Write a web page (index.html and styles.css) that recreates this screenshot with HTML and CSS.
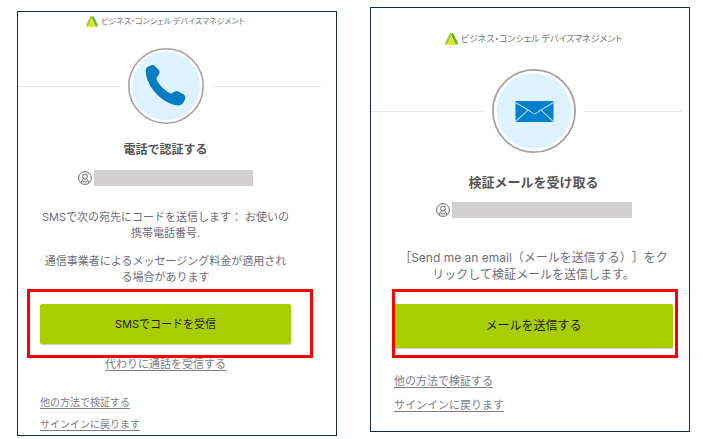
FILE: index.html
```html
<!DOCTYPE html>
<html lang="ja">
<head>
    <meta charset="UTF-8" />
    <meta name="viewport" content="width=device-width, initial-scale=1" />
    <title>ビジネス・コンシェル デバイスマネジメント</title>
    <link rel="stylesheet" href="styles.css">
</head>
<body>
    <main class="screens">
        <section class="card card-sms">
            <div class="brand">
                <svg class="brand-icon" viewBox="0 0 13 12">
                    <path d="M4.4 1.2Q5 0 6.5 0T8.6 1.2L6.3 3 3 11.8H1.6Q-.4 11.6.4 9.4Z" fill="#a5ce1e" />
                    <path d="M7.4.2Q8.3.3 8.8 1.5L12.7 9.2Q13.3 11.5 11.3 11.8L10 11.2 6.5 3Z" fill="#62b82e" />
                    <path d="M6.5 3.6 10 11.8H2.8Z" fill="#e4e400" />
                    <path d="M2.6 11.6 6.5 3.2 10.3 11.6" fill="none" stroke="#f4f7b0" stroke-width=".6" />
                </svg>
                <span>ビジネス・コンシェル デバイスマネジメント</span>
            </div>
            <div class="factor">
                <div class="rule"></div>
                <svg class="factor-icon" viewBox="0 0 76 76">
                    <circle cx="38" cy="38" r="37.2" fill="#fff" stroke="#a3a3a3" stroke-width="1.6" />
                    <circle cx="38" cy="38" r="34" fill="#def2ff" />
                    <path d="M20.5 18.6 23.4 17.2Q25.3 16.7 26.8 18L30.8 22Q32.2 23.8 31.3 25.8L28.9 29.6Q28 31 29 32.8Q34 41 42 45.2Q43.6 46 44.9 44.8L46.8 43.5Q48.6 42.7 50.4 43.4L55.8 46.4Q57.5 47.6 57.4 49.6Q57 52.6 54.6 55.6Q53 57.6 50.6 57.6Q40.5 56.8 30.5 48Q20 38 18 26.6Q17.3 22.6 18.2 20.6Q19 19.2 20.5 18.6Z" fill="#007dc1" />
                </svg>
                <div class="rule"></div>
            </div>
            <h1 class="title">電話で認証する</h1>
            <div class="user">
                <svg class="user-icon" viewBox="0 0 14 14">
                    <g fill="none" stroke="#686868">
                        <circle cx="7" cy="7" r="6.4" />
                        <circle cx="7" cy="5.6" r="2.5" />
                        <path d="M3.2 11.8Q3.2 9.2 5.6 8.2M10.8 11.8Q10.8 9.2 8.4 8.2M4.6 10.8H9.4" />
                    </g>
                </svg>
                <span class="user-name"></span>
            </div>
            <p class="text">SMSで次の宛先にコードを送信します： お使いの<br>携帯電話番号.</p>
            <p class="text">通信事業者によるメッセージング料金が適用され<br>る場合があります</p>
            <div class="highlight">
                <button class="submit" type="button">SMSでコードを受信</button>
            </div>
            <a class="call-link" href="#">代わりに通話を受信する</a>
            <nav class="links">
                <a href="#">他の方法で検証する</a>
                <a href="#">サインインに戻ります</a>
            </nav>
        </section>

        <section class="card card-email">
            <div class="brand">
                <svg class="brand-icon" viewBox="0 0 13 12">
                    <path d="M4.4 1.2Q5 0 6.5 0T8.6 1.2L6.3 3 3 11.8H1.6Q-.4 11.6.4 9.4Z" fill="#a5ce1e" />
                    <path d="M7.4.2Q8.3.3 8.8 1.5L12.7 9.2Q13.3 11.5 11.3 11.8L10 11.2 6.5 3Z" fill="#62b82e" />
                    <path d="M6.5 3.6 10 11.8H2.8Z" fill="#e4e400" />
                    <path d="M2.6 11.6 6.5 3.2 10.3 11.6" fill="none" stroke="#f4f7b0" stroke-width=".6" />
                </svg>
                <span>ビジネス・コンシェル デバイスマネジメント</span>
            </div>
            <div class="factor">
                <div class="rule"></div>
                <svg class="factor-icon" viewBox="0 0 84 84">
                    <circle cx="42" cy="42" r="41.1" fill="#fff" stroke="#a3a3a3" stroke-width="1.8" />
                    <circle cx="42" cy="42" r="37.5" fill="#def2ff" />
                    <rect x="23.5" y="32" width="38" height="21" fill="#0080cc" />
                    <path d="M23.5 33.5 38.5 42.5Q40.5 44.8 42.5 44.8T46.5 42.5L61.5 33.5M23.5 52.5 36 41.2M61.5 52.5 49 41.2" fill="none" stroke="#a9d8f5" stroke-width="1.1" />
                </svg>
                <div class="rule"></div>
            </div>
            <h1 class="title">検証メールを受け取る</h1>
            <div class="user">
                <svg class="user-icon" viewBox="0 0 14 14">
                    <g fill="none" stroke="#686868">
                        <circle cx="7" cy="7" r="6.4" />
                        <circle cx="7" cy="5.6" r="2.5" />
                        <path d="M3.2 11.8Q3.2 9.2 5.6 8.2M10.8 11.8Q10.8 9.2 8.4 8.2M4.6 10.8H9.4" />
                    </g>
                </svg>
                <span class="user-name"></span>
            </div>
            <p class="text">［Send me an email（メールを送信する）］をク<br>リックして検証メールを送信します。</p>
            <div class="highlight">
                <button class="submit" type="button">メールを送信する</button>
            </div>
            <nav class="links">
                <a href="#">他の方法で検証する</a>
                <a href="#">サインインに戻ります</a>
            </nav>
        </section>
    </main>
</body>
</html>
```
FILE: styles.css
```css
* { box-sizing: border-box; }

body {
    margin: 0;
    background: #fff;
    color: #6f6e78;
    font-family: Inter, "Noto Sans CJK JP", sans-serif;
    font-size: 11px;
    line-height: 16px;
    text-spacing-trim: space-all;
}

.screens {
    display: grid;
    grid-template-columns: 1fr 1fr;
    align-items: start;
    gap: 33px;
    padding: 7px 13px 0 17px;
}

.card {
    display: flex;
    flex-direction: column;
    border: 1px solid #14294b;
}
.card-sms {
    margin-top: 4px;
    padding: 1px 45px 3px 22px;
}
.card-email {
    padding: 23px 16px 18px 23px;
}

.brand {
    display: flex;
    justify-content: center;
    align-items: center;
    gap: 3px;
    color: #777;
    font-family: "Noto Sans CJK JP", sans-serif;
    font-size: 8px;
    font-feature-settings: "palt";
    white-space: nowrap;
}
.brand-icon { width: 12px; height: 11px; }
.card-email .brand { font-size: 9px; }
.card-email .brand-icon { width: 13px; height: 12px; }

.factor {
    display: flex;
    align-items: center;
    gap: 8px;
    margin-top: 19px;
}
.factor-icon { width: 76px; height: 76px; }
.card-email .factor { margin-top: 22px; }
.card-email .factor-icon { width: 84px; height: 84px; }

/* the lines run past the text column */
.rule { flex: 1; }
.rule::before {
    content: "";
    display: block;
    height: 1px;
    background: #e8e8e8;
}
.card-sms .rule:first-child::before { margin-left: -22px; }
.card-sms .rule:last-child::before { margin-right: -30px; }
.card-email .rule:first-child::before { margin-left: -23px; }
.card-email .rule:last-child::before { margin-right: -9px; }

.title {
    margin: 16px 0 10px;
    color: #555;
    font-size: 12px;
    line-height: 20px;
    text-align: center;
}
.card-email .title { margin-top: 19px; font-size: 13px; }

.user {
    display: flex;
    justify-content: center;
    align-items: center;
    gap: 2px;
    margin-bottom: 23px;
}
.user-icon { width: 14px; height: 14px; }
.user-name {
    width: 159px;
    height: 16px;
    background: #d0cece;
}
.card-email .user { margin-bottom: 31px; }
.card-email .user-name { width: 180px; }

.text {
    margin: 0 0 12px;
    text-align: center;
    white-space: nowrap;
}
.card-email .text {
    margin: 0;
    font-size: 12px;
    line-height: 17px;
}

.highlight {
    position: relative;
    margin-top: 7px;
}
.highlight::after {
    content: "";
    position: absolute;
    inset: -15px -22px -14px -13px;
    border: 3px solid #f00;
    pointer-events: none;
}
.card-email .highlight { margin-top: 21px; }
.card-email .highlight::after { inset: -15px -5px -10px -2px; }

.submit {
    display: block;
    width: 100%;
    height: 40px;
    padding: 0 0 3px;
    border: none;
    border-radius: 2px;
    background: #aacd00;
    box-shadow: 0 1px 1px #ccc;
    color: #1d1d21;
    font-family: inherit;
    font-size: 11px;
    cursor: pointer;
}
.card-email .submit { height: 44px; font-size: 12px; }

a {
    color: #7d7c86;
    text-decoration: underline;
    text-underline-offset: 2px;
}
.call-link {
    align-self: center;
    margin-top: 12px;
}

.links {
    display: flex;
    flex-direction: column;
    align-items: flex-start;
    gap: 6px;
    margin-top: 22px;
    font-size: 10px;
}
.card-email .links {
    gap: 8px;
    margin-top: 25px;
    font-size: 11px;
}
```
